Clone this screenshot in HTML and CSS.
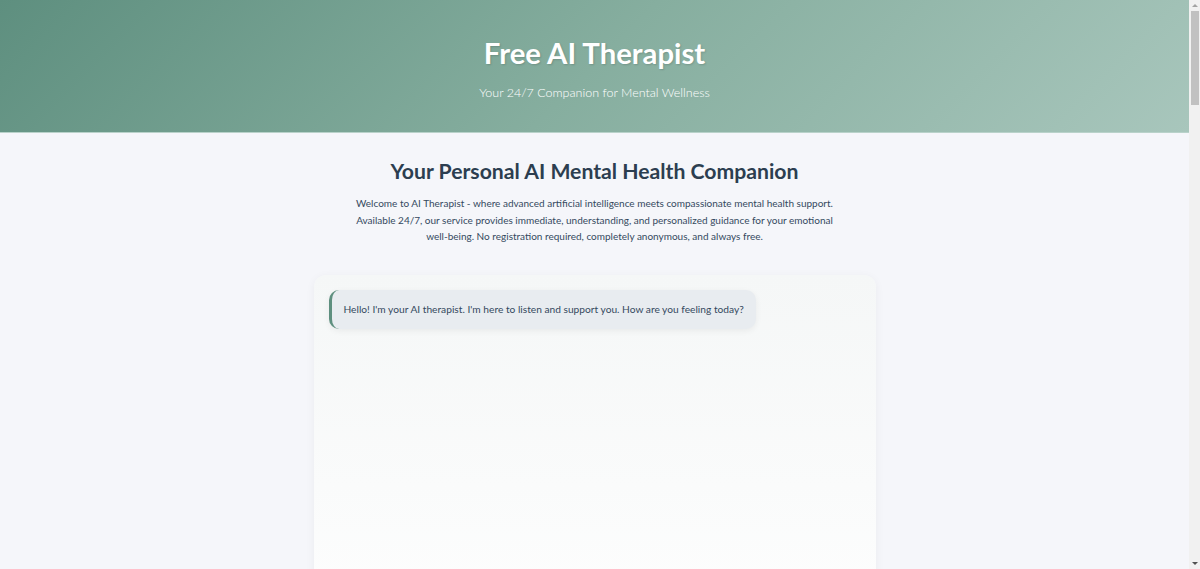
FILE: index.html
```html
<!DOCTYPE html>
<html lang="en">
<head>
<meta charset="utf-8">
<title>Free AI Therapist</title>
<link rel="stylesheet" href="styles.css">
</head>
<body>
<div class="page">
  <header class="hero">
    <h1 class="hero-title">Free AI Therapist</h1>
    <p class="hero-sub">Your 24/7 Companion for Mental Wellness</p>
  </header>
  <main class="main">
    <section class="intro">
      <h2 class="intro-title">Your Personal AI Mental Health Companion</h2>
      <p class="intro-text">Welcome to AI Therapist - where advanced artificial intelligence meets compassionate mental health support. Available 24/7, our service provides immediate, understanding, and personalized guidance for your emotional well-being. No registration required, completely anonymous, and always free.</p>
    </section>
    <section class="chat">
      <div class="messages">
        <div class="msg bot">Hello! I'm your AI therapist. I'm here to listen and support you. How are you feeling today?</div>
      </div>
    </section>
  </main>
</div>
<div class="scrollbar" aria-hidden="true">
  <span class="sb-arrow up"></span>
  <span class="sb-thumb"></span>
  <span class="sb-arrow down"></span>
</div>
</body>
</html>
```
FILE: styles.css
```css
body {
  margin: 0;
  background: #f5f6fa;
  font-family: Lato, "Open Sans", sans-serif;
  color: #2c3e50;
  overflow: hidden;
}
.page { margin-right: 11px; }
.hero {
  height: 133px;
  box-sizing: border-box;
  padding-top: 34px;
  text-align: center;
  color: #fff;
  background: linear-gradient(135deg, #5e8f7f 0%, #86ae9f 50%, #a8c6bc 100%);
  border-bottom: 1px solid #b9d2ca;
}
.hero-title {
  margin: 0;
  font-size: 29.3px;
  font-weight: 700;
  line-height: 38px;
  text-shadow: 1px 1px 2px rgba(0,0,0,0.15);
}
.hero-sub {
  margin: 12px 0 0;
  font-size: 12.5px;
  font-weight: 300;
  line-height: 18px;
  color: #fff;
}
.main {
  display: flex;
  flex-direction: column;
  align-items: center;
  padding-top: 23px;
}
.intro { text-align: center; width: 490px; display: flex; flex-direction: column; align-items: center; }
.intro-title {
  margin: 0;
  font-size: 21.2px;
  font-weight: 700;
  line-height: 30px;
  color: #2c3e50;
  white-space: nowrap;
}
.intro-text {
  margin: 9px 0 0;
  font-size: 10px;
  line-height: 16.5px;
  color: #34495e;
}
.chat {
  margin-top: 30px;
  width: 562px;
  height: 420px;
  box-sizing: border-box;
  padding: 15px;
  border-radius: 12px;
  background: linear-gradient(180deg, #f5f7f7 0%, #ffffff 100%);
  box-shadow: 0 2px 10px rgba(0,0,0,0.05);
}
.msg {
  display: inline-block;
  padding: 12px 12px;
  font-size: 10.2px;
  line-height: 15px;
  color: #34495e;
  background: #e8ecf0;
  border-left: 3px solid #5e8f7f;
  border-radius: 10px;
  box-shadow: 0 2px 6px rgba(0,0,0,0.06);
}
.scrollbar {
  position: fixed;
  top: 0;
  right: 0;
  width: 11px;
  height: 100%;
  background: #f1f1f1;
  display: flex;
  flex-direction: column;
  align-items: center;
}
.sb-arrow {
  width: 0;
  height: 0;
  border-left: 3px solid transparent;
  border-right: 3px solid transparent;
  margin: 4px 0;
}
.sb-arrow.up { border-bottom: 3px solid #a3a3a3; }
.sb-arrow.down { border-top: 3px solid #505050; margin-top: auto; }
.sb-thumb {
  width: 8px;
  height: 94px;
  background: #c1c1c1;
}
```
